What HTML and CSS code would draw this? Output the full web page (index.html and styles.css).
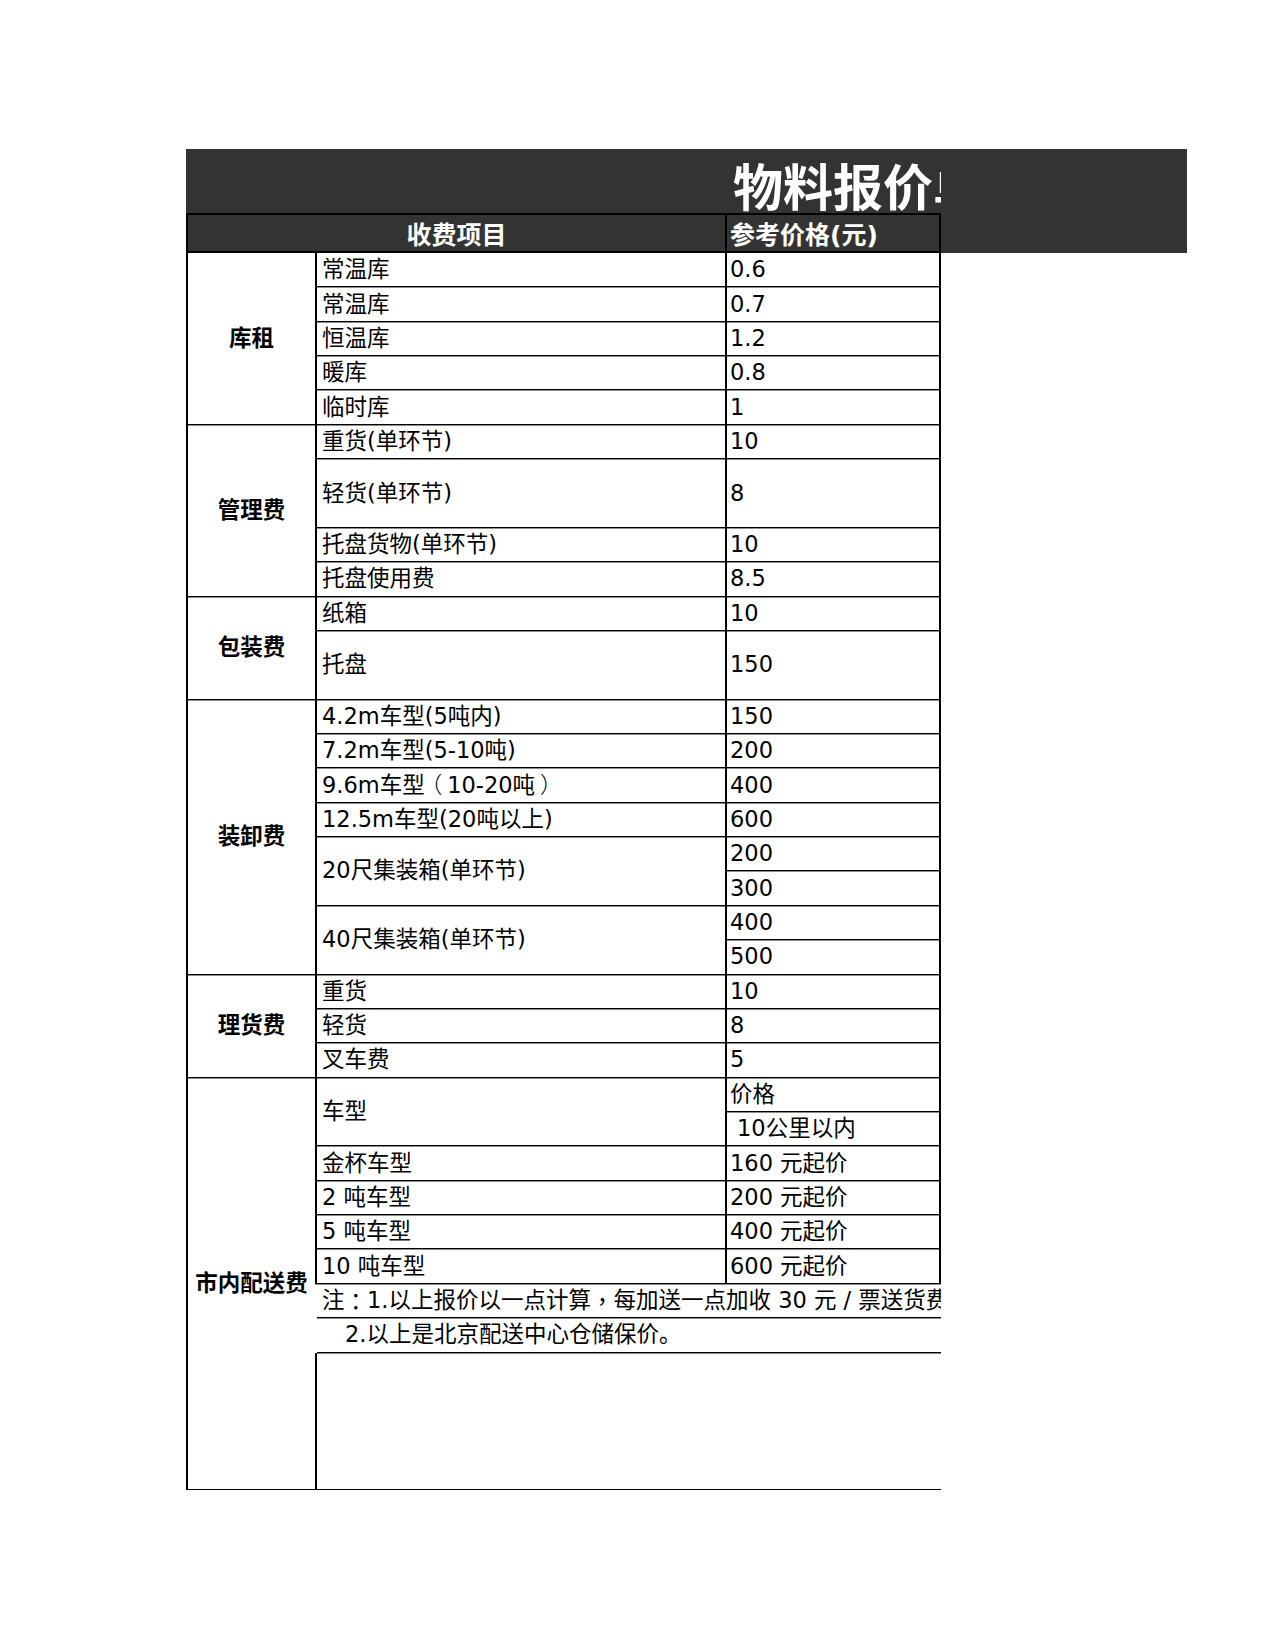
FILE: index.html
```html
<!DOCTYPE html>
<html lang="zh-CN">
<head>
<meta charset="utf-8">
<title>物料报价单</title>
<link rel="stylesheet" href="styles.css">
</head>
<body>
<div class="sheet">
  <div class="title-bar">
    <div class="title-clip"><span class="title">物料报价单</span></div>
  </div>
  <div class="head-bar">
    <div class="head-grid">
      <div class="hcell hc-item">收费项目</div>
      <div class="hcell hc-price">参考价格(元)</div>
    </div>
  </div>
  <div class="grid">
    <div class="cell cat span5">库租</div>
    <div class="cell item">常温库</div><div class="cell price">0.6</div>
    <div class="cell item">常温库</div><div class="cell price">0.7</div>
    <div class="cell item">恒温库</div><div class="cell price">1.2</div>
    <div class="cell item">暖库</div><div class="cell price">0.8</div>
    <div class="cell item">临时库</div><div class="cell price">1</div>

    <div class="cell cat span5">管理费</div>
    <div class="cell item">重货(单环节)</div><div class="cell price">10</div>
    <div class="cell item span2">轻货(单环节)</div><div class="cell price span2">8</div>
    <div class="cell item">托盘货物(单环节)</div><div class="cell price">10</div>
    <div class="cell item">托盘使用费</div><div class="cell price">8.5</div>

    <div class="cell cat span3">包装费</div>
    <div class="cell item">纸箱</div><div class="cell price">10</div>
    <div class="cell item span2">托盘</div><div class="cell price span2">150</div>

    <div class="cell cat span8">装卸费</div>
    <div class="cell item">4.2m车型(5吨内)</div><div class="cell price">150</div>
    <div class="cell item">7.2m车型(5-10吨)</div><div class="cell price">200</div>
    <div class="cell item">9.6m车型<span class="pp">（</span>10-20吨<span class="pp">）</span></div><div class="cell price">400</div>
    <div class="cell item">12.5m车型(20吨以上)</div><div class="cell price">600</div>
    <div class="cell item span2">20尺集装箱(单环节)</div><div class="cell price">200</div>
    <div class="cell price">300</div>
    <div class="cell item span2">40尺集装箱(单环节)</div><div class="cell price">400</div>
    <div class="cell price">500</div>

    <div class="cell cat span3">理货费</div>
    <div class="cell item">重货</div><div class="cell price">10</div>
    <div class="cell item">轻货</div><div class="cell price">8</div>
    <div class="cell item">叉车费</div><div class="cell price">5</div>

    <div class="cell cat span12 open-right">市内配送费</div>
    <div class="cell item lb span2">车型</div><div class="cell price">价格</div>
    <div class="cell price indent">10公里以内</div>
    <div class="cell item lb">金杯车型</div><div class="cell price">160 元起价</div>
    <div class="cell item lb">2 吨车型</div><div class="cell price">200 元起价</div>
    <div class="cell item lb">5 吨车型</div><div class="cell price">400 元起价</div>
    <div class="cell item lb">10 吨车型</div><div class="cell price">600 元起价</div>
    <div class="cell note">注<span class="pm">：</span>1.以上报价以一点计算<span class="pm">，</span>每加送一点加收 30 元 / 票送货费。</div>
    <div class="cell note note2">2.以上是北京配送中心仓储保价。</div>
    <div class="cell box span4"></div>
  </div>
</div>
</body>
</html>
```

FILE: styles.css
```css
html, body {
  margin: 0;
  padding: 0;
  background: #ffffff;
}

body {
  font-family: "DejaVu Sans", "Noto Sans CJK SC", sans-serif;
  color: #000000;
}

.sheet {
  padding: 149px 0 0 186px;
}

.title-bar {
  width: 1001px;
  height: 64px;
  background: #333333;
}

.title-clip {
  width: 755px;
  height: 100%;
  box-sizing: border-box;
  padding: 6px 0 0 547px;
  overflow: hidden;
  display: flex;
  align-items: center;
}

.title {
  font-family: "Noto Sans CJK SC", sans-serif;
  font-weight: 700;
  font-size: 50px;
  line-height: 1;
  color: #ffffff;
  white-space: nowrap;
}

.head-bar {
  width: 1001px;
  height: 40px;
  background: #333333;
}

.head-grid {
  width: 755px;
  height: 40px;
  box-sizing: border-box;
  display: grid;
  grid-template-columns: 539px 214px;
  border-left: 2px solid #000;
  border-top: 2px solid #000;
  border-bottom: 2px solid #000;
}

.hcell {
  display: flex;
  align-items: center;
  border-right: 2px solid #000;
  color: #ffffff;
  font-weight: 700;
  font-size: 25px;
  white-space: nowrap;
  overflow: hidden;
}

.hc-item {
  justify-content: center;
}

.hc-price {
  padding-left: 3px;
}

.grid {
  width: 755px;
  box-sizing: border-box;
  display: grid;
  grid-template-columns: 129px 410px 214px;
  grid-template-rows: repeat(36, 34.36px);
  border-left: 2px solid #000;
}

.cell {
  box-sizing: border-box;
  display: flex;
  align-items: center;
  font-size: 22.5px;
  line-height: 1.2;
  white-space: nowrap;
  overflow: hidden;
  border-bottom: 1px solid #000;
  box-shadow: 0 1px 0 #8c8c8c;
}

.cat {
  grid-column: 1;
  justify-content: center;
  font-weight: 700;
  border-right: 2px solid #000;
}

.cat.open-right {
  border-right-color: transparent;
}

.item {
  grid-column: 2;
  padding-left: 5px;
  border-right: 2px solid #000;
}

.item.lb {
  margin-left: -2px;
  border-left: 2px solid #000;
}

.price {
  grid-column: 3;
  padding-left: 3px;
  border-right: 2px solid #000;
}

.price.indent {
  padding-left: 10px;
}

.note {
  grid-column: 2 / 4;
  padding-left: 5px;
}

.note2 {
  padding-left: 28px;
}

.box {
  grid-column: 2 / 4;
  margin-left: -2px;
  border-left: 2px solid #000;
}

/* full-width punctuation centred in its em box, as in the reference font */
.pm {
  font-family: "Noto Sans CJK TC", sans-serif;
}

.pp {
  display: inline-block;
  width: 1em;
  text-align: center;
  font-weight: 300;
  font-feature-settings: "palt";
}

.span2 { grid-row: span 2; }
.span3 { grid-row: span 3; }
.span4 { grid-row: span 4; }
.span5 { grid-row: span 5; }
.span8 { grid-row: span 8; }
.span12 { grid-row: span 12; }
```
